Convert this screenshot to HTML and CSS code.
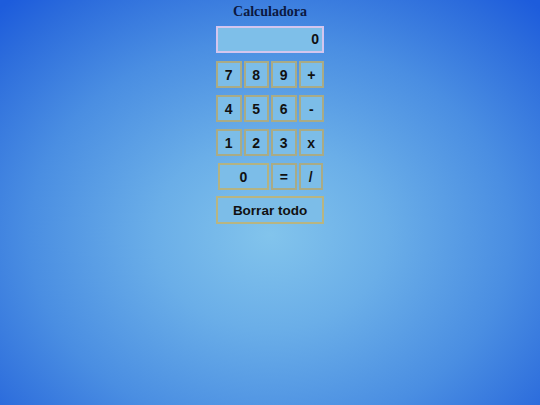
FILE: index.html
```html
<!DOCTYPE html>
<html lang="es">
<head>
<meta charset="utf-8">
<title>Calculadora</title>
<link rel="stylesheet" href="styles.css">
</head>
<body>
<main class="calc">
  <h1 class="title">Calculadora</h1>
  <div class="display">0</div>
  <div class="keys">
    <button class="key">7</button>
    <button class="key">8</button>
    <button class="key">9</button>
    <button class="key">+</button>
    <button class="key">4</button>
    <button class="key">5</button>
    <button class="key">6</button>
    <button class="key">-</button>
    <button class="key">1</button>
    <button class="key">2</button>
    <button class="key">3</button>
    <button class="key">x</button>
    <button class="key key-zero">0</button>
    <button class="key">=</button>
    <button class="key key-div">/</button>
    <button class="key key-clear">Borrar todo</button>
  </div>
</main>
</body>
</html>
```
FILE: styles.css
```css
html, body {
  margin: 0;
  height: 100%;
}
body {
  width: 540px;
  height: 405px;
  overflow: hidden;
  background: radial-gradient(ellipse 72% 78% at 50% 58%, #82c4ec 0%, #6aaee8 30%, #4a8ee2 62%, #2c6cdc 88%, #1d5cdc 100%);
  font-family: "Liberation Sans", Arial, sans-serif;
}
.calc {
  width: 108px;
  margin: 0 auto;
  padding-top: 3px;
}
.title {
  margin: 0 -40px 6px;
  font-family: "Liberation Serif", "Times New Roman", serif;
  font-size: 14px;
  line-height: 17px;
  font-weight: bold;
  color: #0b1840;
  text-align: center;
}
.display {
  box-sizing: border-box;
  height: 27px;
  border: 2px solid #d4c6ee;
  background: #7ebfe9;
  text-align: right;
  padding-right: 3px;
  font-size: 14px;
  font-weight: bold;
  line-height: 23px;
  color: #111;
}
.keys {
  margin-top: 8px;
  display: grid;
  grid-template-columns: repeat(4, 1fr);
  grid-auto-rows: 27px;
  column-gap: 2px;
  row-gap: 7px;
}
.key {
  box-sizing: border-box;
  margin: 0;
  padding: 0;
  border: 2px solid #a9ab86;
  background: #7cbde8;
  font-family: "Liberation Sans", Arial, sans-serif;
  font-size: 14px;
  font-weight: bold;
  color: #111;
}
.key-zero {
  grid-column: span 2;
  margin-left: 2px;
  border-color: #b3b383;
}
.key-div {
  margin-right: 1px;
}
.key-clear {
  grid-column: span 4;
  height: 28px;
  margin-top: -1px;
  font-size: 13.5px;
  border-color: #b7b583;
}
```
